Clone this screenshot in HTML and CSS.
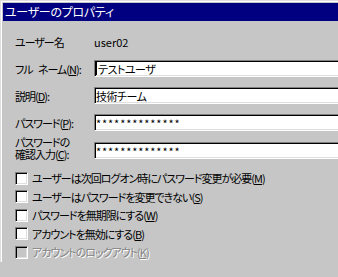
FILE: index.html
```html
<!DOCTYPE html>
<html lang="ja">
	<head>
		<title>ユーザーのプロパティ</title>
		<meta charset="UTF-8" />
		<link rel="stylesheet" href="styles.css">
	</head>
	<body>
		<div class="window">
			<div class="window-inner">
				<div class="titlebar">ユーザーのプロパティ</div>
				<div class="content">
					<!-- User name -->
					<div class="info-row">
						<span class="label">ユーザー名</span>
						<span class="value">user02</span>
					</div>

					<!-- Text fields -->
					<div class="field-row first">
						<span class="label">フル ネーム(<u>N</u>):</span>
						<div class="field"><span class="caret"></span>テストユーザ</div>
					</div>
					<div class="field-row">
						<span class="label">説明(<u>D</u>):</span>
						<div class="field">技術チーム</div>
					</div>
					<div class="field-row">
						<span class="label">パスワード(<u>P</u>):</span>
						<div class="field mask">**************</div>
					</div>
					<div class="field-row last">
						<span class="label two-line">
							<span class="line">パスワードの</span>
							<span class="line">確認入力(<u>C</u>):</span>
						</span>
						<div class="field mask">**************</div>
					</div>

					<!-- Options -->
					<div class="checklist">
						<div class="check-row">
							<span class="checkbox"></span>
							<span>ユーザーは次回ログオン時にパスワード変更が必要(<u>M</u>)</span>
						</div>
						<div class="check-row">
							<span class="checkbox"></span>
							<span>ユーザーはパスワードを変更できない(<u>S</u>)</span>
						</div>
						<div class="check-row">
							<span class="checkbox"></span>
							<span>パスワードを無期限にする(<u>W</u>)</span>
						</div>
						<div class="check-row">
							<span class="checkbox"></span>
							<span>アカウントを無効にする(<u>B</u>)</span>
						</div>
						<div class="check-row disabled">
							<span class="checkbox"></span>
							<span>アカウントのロックアウト(<u>K</u>)</span>
						</div>
					</div>
				</div>
			</div>
		</div>
	</body>
</html>
```

FILE: styles.css
```css
body {
	margin: 0;
	overflow: hidden;
	background-color: #c6c6c6;
	font-family: "Noto Sans CJK JP", sans-serif;
	font-size: 11px;
	letter-spacing: -1px;
	word-spacing: 4px;
	font-feature-settings: "palt";
	color: #000;
}

.window {
	border-top: 1px solid #dfdfdf;
	border-left: 1px solid #dfdfdf;
}

.window-inner {
	border-top: 1px solid #fff;
	border-left: 1px solid #fff;
	padding: 1px 0 0 1px;
}

.titlebar {
	height: 18px;
	line-height: 18px;
	padding-left: 2px;
	background-color: #000080;
	color: #fff;
	font-size: 12px;
	letter-spacing: -0.3px;
}

.content {
	padding: 15px 0 0 12px;
}

.info-row,
.field-row {
	display: flex;
	align-items: center;
}

.info-row {
	height: 12px;
	line-height: 12px;
}

.value {
	letter-spacing: 0;
}

.label {
	flex: none;
	width: 79px;
	line-height: 12px;
}
.label.two-line {
	display: flex;
	flex-direction: column;
	margin-top: -6px;
}
.two-line .line {
	height: 12px;
	overflow: visible;
}

.field-row {
	height: 17px;
	margin-top: 10px;
}
.field-row.first {
	margin-top: 12px;
}
.field-row.last {
	margin-top: 11px;
}

.field {
	flex: none;
	display: flex;
	align-items: center;
	box-sizing: border-box;
	width: 260px;
	height: 17px;
	padding-left: 1px;
	background-color: #fff;
	border: 1px solid;
	border-color: #808080 #fff #fff #808080;
	box-shadow: inset 1px 1px 0 #000, inset -1px -1px 0 #dfdfdf;
	white-space: nowrap;
	letter-spacing: -0.5px;
}

.mask {
	letter-spacing: 0.9px;
}

.caret {
	width: 1px;
	height: 13px;
	margin-right: 1px;
	background-color: #000;
}

.checklist {
	margin-top: 10px;
}

.check-row {
	display: flex;
	align-items: center;
	height: 18.5px;
	white-space: nowrap;
}

.checkbox {
	flex: none;
	box-sizing: border-box;
	width: 13px;
	height: 13px;
	margin-right: 4px;
	background-color: #fff;
	border: 1px solid;
	border-color: #808080 #fff #fff #808080;
	box-shadow: inset 1px 1px 0 #000, inset -1px -1px 0 #dfdfdf;
}

.check-row.disabled {
	color: #848484;
	text-shadow: 1px 1px 0 #fff;
}
.check-row.disabled .checkbox {
	background-color: #c6c6c6;
}
```
